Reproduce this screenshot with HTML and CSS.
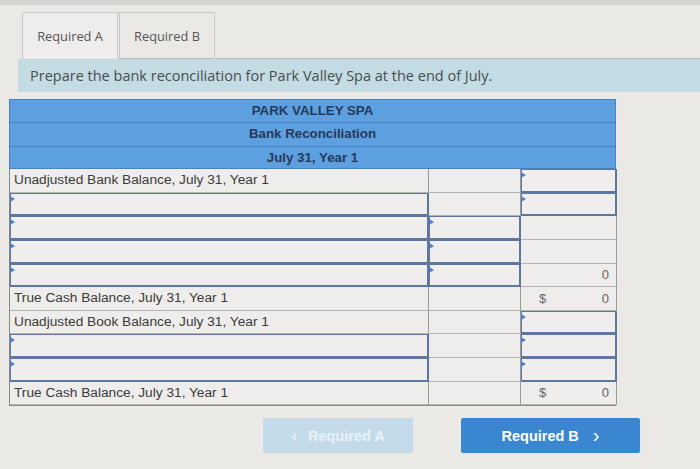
FILE: index.html
```html
<!DOCTYPE html>
<html>
<head>
<meta charset="utf-8">
<link rel="stylesheet" href="styles.css">
</head>
<body>
<div class="topbar"></div>
<div class="tabs">
  <div class="tab active">Required A</div>
  <div class="tab">Required B</div>
  <div class="tabline"></div>
</div>
<div class="instr">Prepare the bank reconciliation for Park Valley Spa at the end of July.</div>
<div class="sheet">
  <div class="hd">PARK VALLEY SPA</div>
  <div class="hd">Bank Reconciliation</div>
  <div class="hd">July 31, Year 1</div>
  <div class="grid">
    <div class="c lbl">Unadjusted Bank Balance, July 31, Year 1</div><div class="c"></div><div class="c inp"></div>
    <div class="c inp"></div><div class="c"></div><div class="c inp"></div>
    <div class="c inp"></div><div class="c inp"></div><div class="c"></div>
    <div class="c inp"></div><div class="c inp"></div><div class="c"></div>
    <div class="c inp"></div><div class="c inp"></div><div class="c num"><span></span><span>0</span></div>
    <div class="c lbl">True Cash Balance, July 31, Year 1</div><div class="c"></div><div class="c num"><span>$</span><span>0</span></div>
    <div class="c lbl">Unadjusted Book Balance, July 31, Year 1</div><div class="c"></div><div class="c inp"></div>
    <div class="c inp"></div><div class="c"></div><div class="c inp"></div>
    <div class="c inp"></div><div class="c"></div><div class="c inp"></div>
    <div class="c lbl">True Cash Balance, July 31, Year 1</div><div class="c"></div><div class="c num"><span>$</span><span>0</span></div>
  </div>
</div>
<div class="nav">
  <div class="btn prev"><span class="chev">&lsaquo;</span> Required A</div>
  <div class="btn next">Required B <span class="chev">&rsaquo;</span></div>
</div>
</body>
</html>
```
FILE: styles.css
```css
html, body { margin: 0; padding: 0; }
body {
  background: #ebe9e6;
  width: 700px;
  height: 469px;
  overflow: hidden;
  font-family: "Liberation Sans", Arial, sans-serif;
}
.topbar { height: 5px; background: #d5d4d2; }
.tabs {
  display: flex;
  align-items: flex-end;
  margin-top: 6px;
  padding-left: 22px;
  height: 48px;
}
.tab {
  box-sizing: border-box;
  height: 47px;
  width: 96px;
  border: 1px solid #c9c8c6;
  border-bottom: 1px solid #b8b8b8;
  background: #ebe9e6;
  color: #555;
  font-family: "Open Sans", sans-serif;
  font-size: 12.8px;
  display: flex;
  align-items: center;
  justify-content: center;
  margin-right: 1px;
}
.tab.active { border-bottom-color: #ebe9e6; background: #eeedeb; }
.tabline { flex: 1; border-bottom: 1px solid #b8b8b8; align-self: flex-end; }
.instr {
  margin-left: 18px;
  height: 33px;
  line-height: 33px;
  background: #c3dbe2;
  padding-left: 12px;
  color: #4a4d50;
  font-family: "Open Sans", sans-serif;
  font-size: 14.5px;
}
.sheet {
  margin: 7px 0 0 9px;
  width: 607px;
}
.hd {
  box-sizing: border-box;
  height: 23.4px;
  line-height: 22px;
  background: #5ca0e0;
  border: 1px solid #4a80bb;
  border-bottom: none;
  text-align: center;
  font-weight: bold;
  font-size: 13.3px;
  color: #27395a;
}
.hd:nth-child(3) { border-bottom: 1px solid #4a80bb; }
.grid {
  display: grid;
  grid-template-columns: 419px 92px 96px;
  grid-auto-rows: 23.6px;
  border-left: 1px solid #8a8a8a;
  border-bottom: 1px solid #8a8a8a;
}
.c {
  position: relative;
  box-sizing: border-box;
  border-right: 1px solid #9a9a9a;
  border-bottom: 1px solid #b4b4b4;
  background: #eeedeb;
}
.lbl {
  font-size: 13.7px;
  color: #3b3b3b;
  line-height: 22px;
  padding-left: 4px;
  white-space: nowrap;
}
.inp {
  box-shadow: inset 1px 1px 0 0 #5d77a0;
  border-right: 2px solid #5d77a0;
  border-bottom: 2px solid #5d77a0;
  background: #efeeec;
}
.inp::before {
  content: "";
  position: absolute;
  left: 0;
  top: 3px;
  border-top: 3px solid transparent;
  border-bottom: 3px solid transparent;
  border-left: 5px solid #4d7fc2;
}
.num {
  display: flex;
  justify-content: space-between;
  align-items: center;
  padding: 0 7px 0 18px;
  font-size: 13px;
  color: #666;
}
.nav {
  display: flex;
  margin: 12px 0 0 263px;
  gap: 48px;
}
.btn {
  height: 35px;
  display: flex;
  align-items: center;
  justify-content: center;
  font-weight: bold;
  font-size: 14.5px;
  color: #fff;
  border-radius: 2px;
}
.prev { width: 150px; background: #c4dcea; color: #e9f2f8; }
.next { width: 179px; background: #3a86d1; }
.chev { font-size: 20px; font-weight: normal; line-height: 1; margin: 0 10px; position: relative; top: -1px; }
.prev .chev { margin-left: 0; }
.next .chev { margin-right: 0; margin-left: 14px; }
```
